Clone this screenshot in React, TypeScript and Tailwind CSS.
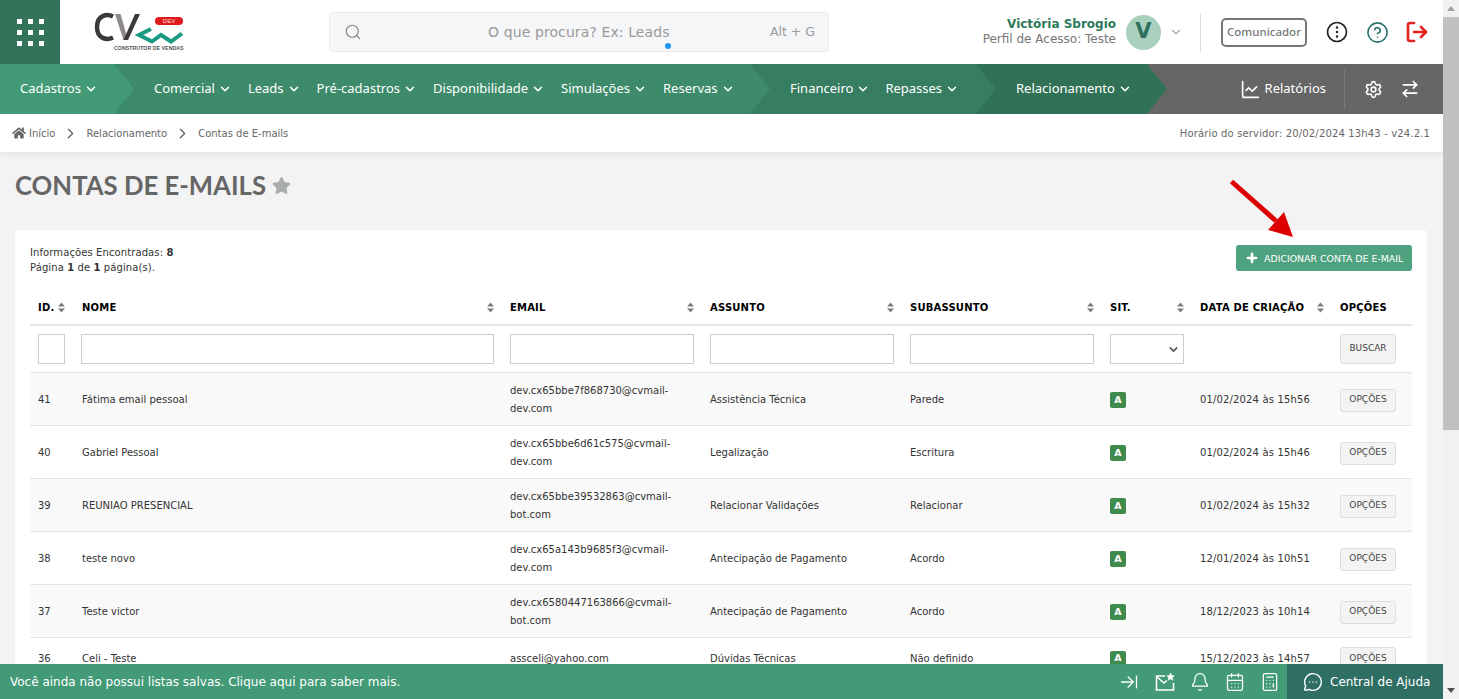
import {
  ArrowRightLeft,
  ArrowRightToLine,
  Bell,
  Calculator,
  CalendarDays,
  ChartLine,
  ChevronDown,
  ChevronRight,
  CircleHelp,
  LogOut,
  MessageCircleMore,
  Plus,
  Search,
  Settings,
} from 'lucide-react'
import { FaHome, FaStar } from 'react-icons/fa'

const rows = [
  { id: 41, nome: 'Fátima email pessoal', email: ['dev.cx65bbe7f868730@cvmail-', 'dev.com'], assunto: 'Assistência Técnica', sub: 'Parede', data: '01/02/2024 às 15h56' },
  { id: 40, nome: 'Gabriel Pessoal', email: ['dev.cx65bbe6d61c575@cvmail-', 'dev.com'], assunto: 'Legalização', sub: 'Escritura', data: '01/02/2024 às 15h46' },
  { id: 39, nome: 'REUNIAO PRESENCIAL', email: ['dev.cx65bbe39532863@cvmail-', 'bot.com'], assunto: 'Relacionar Validações', sub: 'Relacionar', data: '01/02/2024 às 15h32' },
  { id: 38, nome: 'teste novo', email: ['dev.cx65a143b9685f3@cvmail-', 'dev.com'], assunto: 'Antecipação de Pagamento', sub: 'Acordo', data: '12/01/2024 às 10h51' },
  { id: 37, nome: 'Teste victor', email: ['dev.cx6580447163866@cvmail-', 'bot.com'], assunto: 'Antecipação de Pagamento', sub: 'Acordo', data: '18/12/2023 às 10h14' },
  { id: 36, nome: 'Celi - Teste', email: ['assceli@yahoo.com'], assunto: 'Dúvidas Técnicas', sub: 'Não definido', data: '15/12/2023 às 14h57' },
]

function NavItem({ label }: { label: string }) {
  return (
    <span className="flex items-center gap-[3px] whitespace-nowrap">
      {label}
      <ChevronDown size={14} strokeWidth={2.6} />
    </span>
  )
}

function SortIcon() {
  return (
    <svg width="7" height="11" viewBox="0 0 7 11" className="shrink-0 fill-[#7d7d7d]">
      <path d="M3.5 0.5 7 4.5H0Z" />
      <path d="M3.5 10.5 7 6.5H0Z" />
    </svg>
  )
}

function Th({ label, width, sort = true, inset = false }: { label: string; width: string; sort?: boolean; inset?: boolean }) {
  return (
    <th className={`${width} h-[34px] border-b-2 border-[#e5e5e5] py-0 pr-2 ${inset ? 'pl-[9px]' : 'pl-2'} text-left align-middle text-[10px] font-bold text-black`}>
      <span className="flex items-center justify-between tracking-[0.2px]">
        {label}
        {sort && <SortIcon />}
      </span>
    </th>
  )
}

function Logo() {
  return (
    <div className="relative h-[40px] w-[92px]">
      <svg width="92" height="32" viewBox="0 0 92 32" className="absolute top-0 left-0">
        <path d="M19 4.5C13 1.5 3 3 3 15s10 13.5 16 10.5" fill="none" stroke="#3b3a38" strokeWidth="4.5" />
        <path d="M21 2h5.5L34 28h-4.5Z" fill="#8f8a88" />
        <path d="M29.5 28 41 2h5L34 28Z" fill="#3b3a38" />
        <path d="M57 17 45 23 58 29.5 67 23 77 29.5 88 21.5" fill="none" stroke="#1a9a80" strokeWidth="4" />
      </svg>
      <span className="absolute top-[5px] left-[61px] flex h-[8px] w-[28px] items-center justify-center rounded-full bg-[#e01b1b] font-['Liberation_Sans',sans-serif] text-[6px] text-[#ffd9d9]">
        DEV
      </span>
      <span className="absolute top-[33px] left-[20px] font-['Liberation_Sans',sans-serif] text-[5.3px] font-bold whitespace-nowrap text-[#555]">
        CONSTRUTOR DE VENDAS
      </span>
    </div>
  )
}

export default function App() {
  return (
    <div className="flex h-[699px] w-full overflow-hidden bg-[#f3f3f3] font-['DejaVu_Sans',sans-serif]">
      <div className="relative flex h-full w-[1443px] shrink-0 flex-col overflow-hidden">
        {/* top header */}
        <header className="flex h-[64px] shrink-0 items-center bg-white">
          <div className="grid h-full w-[60px] place-items-center bg-[#33735a]">
            <div className="grid grid-cols-3 gap-[6px]">
              {Array.from({ length: 9 }).map((_, i) => (
                <span key={i} className="size-[5px] bg-white" />
              ))}
            </div>
          </div>
          <div className="ml-[34px] w-[235px]">
            <Logo />
          </div>
          <div className="relative flex h-[40px] w-[500px] items-center rounded-[4px] border border-[#ebebeb] bg-[#f5f6f8] pr-[13px] pl-[14px] text-[#999]">
            <Search size={18} strokeWidth={1.5} className="text-[#888]" />
            <span className="ml-[126px] text-[14px] tracking-[0.1px]">O que procura? Ex: Leads</span>
            <span className="ml-auto text-[12.5px]">Alt + G</span>
            <span className="absolute top-[30px] left-[335px] size-[6px] rounded-full bg-[#2196f3]" />
          </div>
          <div className="ml-auto flex items-center">
            <div className="text-right leading-[15px]">
              <div className="text-[12px] font-bold text-[#2c7a5b]">Victória Sbrogio</div>
              <div className="text-[12px] text-[#777]">Perfil de Acesso: Teste</div>
            </div>
            <div className="ml-[10px] grid size-[35px] place-items-center rounded-full bg-[#a9cfbd] text-[21px] font-bold text-[#2f6f5c]">V</div>
            <ChevronDown size={14} strokeWidth={1.7} className="ml-[8px] text-[#33735a]" />
            <div className="ml-[17px] h-[39px] w-px bg-[#ddd]" />
            <div className="ml-[20px] flex h-[29px] w-[86px] items-center justify-center rounded-[5px] border-2 border-[#777] font-['Noto_Sans',sans-serif] text-[11.5px] font-medium text-[#777]">
              Comunicador
            </div>
            <svg width="22" height="22" viewBox="0 0 22 22" className="ml-[19px]">
              <circle cx="11" cy="11" r="9.5" fill="none" stroke="#222" strokeWidth="1.7" />
              <circle cx="11" cy="6.5" r="1.2" fill="#222" />
              <circle cx="11" cy="11" r="1.2" fill="#222" />
              <circle cx="11" cy="15.5" r="1.2" fill="#222" />
            </svg>
            <CircleHelp size={23} strokeWidth={1.7} className="ml-[18px] text-[#2a7269]" />
            <LogOut size={24} strokeWidth={2.6} className="mr-[14px] ml-[16px] text-[#e52222]" />
          </div>
        </header>

        {/* main nav */}
        <nav className="flex h-[50px] shrink-0 bg-[#666] font-['Noto_Sans',sans-serif] text-[13px] text-white">
          <div className="z-40 flex w-[134px] items-center bg-[#429a77] pl-[20px] [clip-path:polygon(0_0,calc(100%-20px)_0,100%_50%,calc(100%-20px)_100%,0_100%)]">
            <NavItem label="Cadastros" />
          </div>
          <div className="z-30 -ml-[20px] flex w-[656px] items-center gap-[16px] bg-[#3d8b6b] pl-[40px] [clip-path:polygon(0_0,calc(100%-20px)_0,100%_50%,calc(100%-20px)_100%,0_100%)]">
            <NavItem label="Comercial" />
            <NavItem label="Leads" />
            <NavItem label="Pré-cadastros" />
            <NavItem label="Disponibilidade" />
            <NavItem label="Simulações" />
            <NavItem label="Reservas" />
          </div>
          <div className="z-20 -ml-[20px] flex w-[246px] items-center gap-[15px] bg-[#367d61] pl-[40px] [clip-path:polygon(0_0,calc(100%-20px)_0,100%_50%,calc(100%-20px)_100%,0_100%)]">
            <NavItem label="Financeiro" />
            <NavItem label="Repasses" />
          </div>
          <div className="z-10 -ml-[20px] flex w-[191px] items-center bg-[#317256] pl-[40px] [clip-path:polygon(0_0,calc(100%-20px)_0,100%_50%,calc(100%-20px)_100%,0_100%)]">
            <NavItem label="Relacionamento" />
          </div>
          <div className="ml-auto flex items-center">
            <ChartLine size={21} strokeWidth={1.9} />
            <span className="ml-[4px]">Relatórios</span>
            <div className="ml-[18px] h-[39px] w-px bg-[#7c7c7c]" />
            <Settings size={19} strokeWidth={2} className="ml-[19px]" />
            <ArrowRightLeft size={20} strokeWidth={2} className="mr-[23px] ml-[17px]" />
          </div>
        </nav>

        {/* breadcrumb */}
        <div className="z-10 flex h-[38px] shrink-0 items-center bg-white pr-[13px] pl-[12px] text-[10px] text-[#666] shadow-[0_2px_6px_rgba(0,0,0,0.07)]">
          <FaHome size={14} className="text-[#666]" />
          <span className="ml-[3px]">Início</span>
          <ChevronRight size={17} strokeWidth={1.8} className="mx-[7px]" />
          <span>Relacionamento</span>
          <ChevronRight size={17} strokeWidth={1.8} className="mx-[7px]" />
          <span>Contas de E-mails</span>
          <span className="ml-auto tracking-[0.15px]">Horário do servidor: 20/02/2024 13h43 - v24.2.1</span>
        </div>

        {/* title */}
        <div className="flex h-[78px] shrink-0 items-start pt-[17px] pl-[15px]">
          <h1 className="font-['Lato',sans-serif] text-[25.7px] leading-[32px] font-bold text-[#666]">CONTAS DE E-MAILS</h1>
          <FaStar size={19} className="mt-[7px] ml-[6px] text-[#a9adad]" />
        </div>

        {/* card */}
        <div className="mr-[16px] ml-[15px] rounded-[4px] bg-white px-[15px] pt-[15px]">
          <div className="flex h-[46px] items-start justify-between">
            <div className="text-[10px] leading-[15px] tracking-[0.1px] text-[#333]">
              <div>
                Informações Encontradas: <b>8</b>
              </div>
              <div>
                Página <b>1</b> de <b>1</b> página(s).
              </div>
            </div>
            <button className="flex h-[26px] w-[176px] items-center rounded-[3px] bg-[#4ea27f] pl-[9px] text-[9.4px] text-white">
              <Plus size={14} strokeWidth={4.5} />
              <span className="ml-[5px] translate-y-px">ADICIONAR CONTA DE E-MAIL</span>
            </button>
          </div>
          <table className="w-[1382px] table-fixed border-collapse text-[10px] text-[#333]">
            <thead>
              <tr>
                <Th label="ID." width="w-[43px]" />
                <Th label="NOME" width="w-[429px]" inset />
                <Th label="EMAIL" width="w-[200px]" />
                <Th label="ASSUNTO" width="w-[200px]" />
                <Th label="SUBASSUNTO" width="w-[200px]" />
                <Th label="SIT." width="w-[90px]" />
                <Th label="DATA DE CRIAÇÃO" width="w-[140px]" />
                <Th label="OPÇÕES" width="w-[80px]" sort={false} />
              </tr>
              <tr className="border-b border-[#e5e5e5]">
                <td className="p-2">
                  <input className="block h-[30px] w-[27px] border border-[#ccc] bg-white" />
                </td>
                {[0, 1, 2, 3].map((i) => (
                  <td key={i} className="p-2">
                    <input className="block h-[30px] w-full border border-[#ccc] bg-white" />
                  </td>
                ))}
                <td className="p-2">
                  <div className="flex h-[30px] w-[74px] items-center justify-end border border-[#ccc] bg-white pr-[3px]">
                    <ChevronDown size={13} strokeWidth={3} className="text-[#555]" />
                  </div>
                </td>
                <td />
                <td className="p-2">
                  <button className="h-[30px] w-[56px] rounded-[3px] border border-[#ddd] bg-[#f3f3f3] text-[9px] text-[#444]">BUSCAR</button>
                </td>
              </tr>
            </thead>
            <tbody>
              {rows.map((r, i) => (
                <tr key={r.id} className={`border-b border-[#e5e5e5] ${i % 2 === 0 ? 'bg-[#f9f9f9]' : 'bg-white'}`}>
                  <td className="px-2 pt-[9px] pb-[7px] leading-[18px]">{r.id}</td>
                  <td className="pt-[9px] pr-2 pb-[7px] pl-[9px] leading-[18px]">{r.nome}</td>
                  <td className="px-2 pt-[9px] pb-[7px] leading-[18px]">
                    {r.email.map((line) => (
                      <div key={line}>{line}</div>
                    ))}
                  </td>
                  <td className="px-2 pt-[9px] pb-[7px] leading-[18px]">{r.assunto}</td>
                  <td className="px-2 pt-[9px] pb-[7px] leading-[18px]">{r.sub}</td>
                  <td className="px-2 pt-[9px] pb-[7px]">
                    <span className="grid h-[16px] w-[16px] place-items-center rounded-[2px] bg-[#3f8a4d] text-[9.5px] font-bold text-white">A</span>
                  </td>
                  <td className="px-2 pt-[9px] pb-[7px] leading-[18px] tracking-[0.15px] whitespace-nowrap">{r.data}</td>
                  <td className="px-2 pt-[9px] pb-[7px]">
                    <button className="block h-[23px] w-[56px] rounded-[3px] border border-[#ddd] bg-[#f3f3f3] text-[9px] text-[#444]">OPÇÕES</button>
                  </td>
                </tr>
              ))}
            </tbody>
          </table>
        </div>

        {/* annotation arrow over the page */}
        <svg width="76" height="70" viewBox="0 0 76 70" className="absolute top-[176px] left-[1226px]">
          <path d="M5.5 5.5 50 45" stroke="#dd0000" strokeWidth="5" fill="none" />
          <path d="M67 61 42 54 58 36Z" fill="#dd0000" />
        </svg>

        {/* bottom bar */}
        <div className="absolute right-0 bottom-0 left-0 flex h-[35px] items-center bg-[#429a77] pl-[10px] text-[12px] text-white">
          <span>Você ainda não possui listas salvas. Clique aqui para saber mais.</span>
          <div className="ml-auto flex items-center gap-[15px] pr-[7px]">
            <ArrowRightToLine size={20} strokeWidth={1.6} />
            <svg width="20" height="20" viewBox="0 0 20 20" fill="none" stroke="currentColor" strokeWidth="1.6" className="ml-[1px]">
              <path d="M10 4H1.5v14h17v-7" />
              <path d="M1.5 4.5 9 11l3-2.5" />
              <path d="m15.5 1 1.2 2.4 2.6.4-1.9 1.8.5 2.6-2.4-1.2-2.4 1.2.5-2.6-1.9-1.8 2.6-.4Z" fill="currentColor" strokeWidth="0.5" />
            </svg>
            <Bell size={20} strokeWidth={1.5} />
            <CalendarDays size={20} strokeWidth={1.5} />
            <Calculator size={20} strokeWidth={1.5} />
          </div>
          <div className="flex h-full w-[156px] items-center bg-[#2f6f63] pl-[16px]">
            <MessageCircleMore size={20} strokeWidth={1.7} />
            <span className="ml-[7px]">Central de Ajuda</span>
          </div>
        </div>
      </div>

      {/* page scrollbar */}
      <div className="flex w-[16px] shrink-0 flex-col items-center bg-[#f1f1f1]">
        <svg width="8" height="5" viewBox="0 0 8 5" className="mt-[6px] mb-[6px] fill-[#a3a3a3]">
          <path d="M4 0 8 5H0Z" />
        </svg>
        <div className="h-[413px] w-full bg-[#c1c1c1]" />
        <svg width="8" height="5" viewBox="0 0 8 5" className="mt-auto mb-[6px] fill-[#505050]">
          <path d="M4 5 8 0H0Z" />
        </svg>
      </div>
    </div>
  )
}
